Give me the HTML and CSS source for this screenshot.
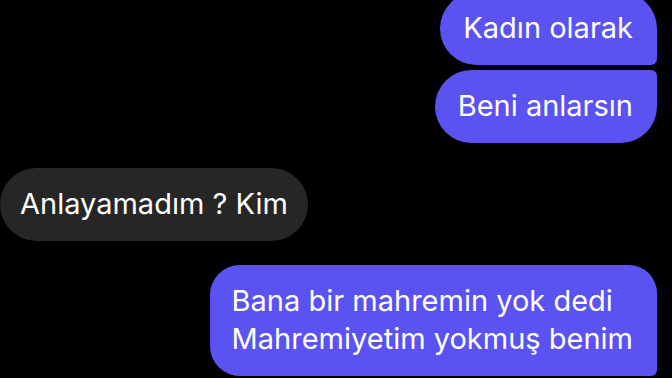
FILE: index.html
```html
<!DOCTYPE html>
<html lang="tr">
<head>
    <meta charset="UTF-8">
    <meta name="viewport" content="width=device-width, initial-scale=1.0">
    <title>Mesajlar</title>
    <link rel="stylesheet" href="styles.css">
</head>
<body>
    <main class="chat">
        <div class="msg sent first">Kadın olarak</div>
        <div class="msg sent last">Beni anlarsın</div>
        <div class="msg received">Anlayamadım ? Kim</div>
        <div class="msg sent multi">Bana bir mahremin yok dedi<br>Mahremiyetim yokmuş benim</div>
    </main>
</body>
</html>
```

FILE: styles.css
```css
html, body {
    margin: 0;
    padding: 0;
    background: #000;
    overflow: hidden;
}

body {
    font-family: Inter, "Noto Sans", sans-serif;
    font-size: 29px;
    line-height: 38px;
    color: #fff;
}

.chat {
    display: flex;
    flex-direction: column;
    padding: 0 15px 0 0;
    margin-top: -8px;
}

.msg {
    padding: 17px 24px 18px 23px;
    border-radius: 37px;
    white-space: nowrap;
}

.sent {
    align-self: flex-end;
    background: #5a52f1;
}

.received {
    align-self: flex-start;
    background: #262626;
    padding-left: 20px;
    padding-right: 20px;
    margin-top: 25px;
}

.sent.first {
    border-bottom-right-radius: 6px;
}

.sent.last {
    margin-top: 5px;
    border-top-right-radius: 6px;
}

.sent.multi {
    margin-top: 24px;
    padding-left: 22px;
    border-radius: 30px 28px 6px 30px;
}
```
